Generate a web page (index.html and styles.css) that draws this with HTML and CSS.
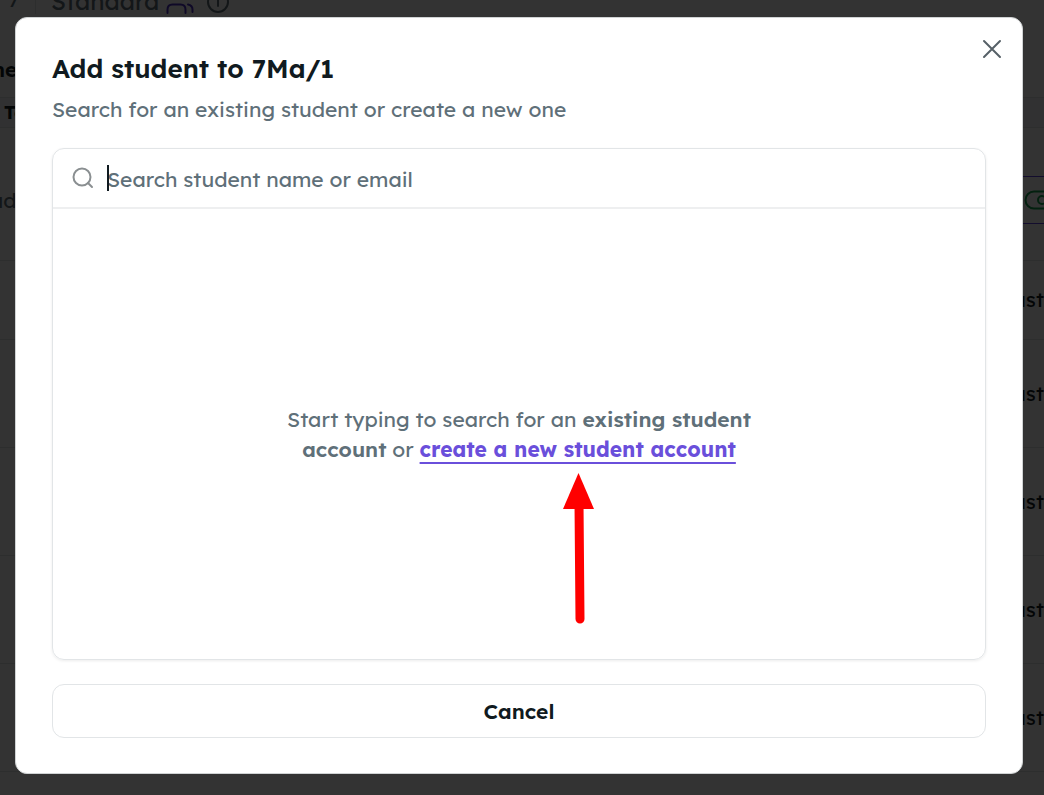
FILE: index.html
```html
<!DOCTYPE html>
<html lang="en">
<head>
<meta charset="utf-8">
<title>Add student to 7Ma/1</title>
<link rel="stylesheet" href="styles.css">
</head>
<body>
<div class="page" aria-hidden="true">
  <div class="page-top">
    <span class="grade">7</span>
    <span class="plan">Standard</span>
    <svg class="people" viewBox="0 0 28 14" width="28" height="14"><path d="M1.500 13V9.500q0-5 5-5h8q5 0 5 5V13M22 4.500q4.500 1 4.500 5V12"/></svg>
    <svg class="info" viewBox="0 0 24 24" width="24" height="24"><circle cx="12" cy="12" r="10"/><path d="M12 6v10"/></svg>
  </div>
  <div class="page-name">ne</div>
  <div class="page-tab">To</div>
  <div class="table-head">
    <span class="head-name">ad</span>
    <span class="toggle-cell"><svg viewBox="0 0 36 20" width="36" height="20"><rect x="1.500" y="1.500" width="33" height="17" rx="8.500"/><circle cx="18" cy="10" r="4"/></svg></span>
  </div>
  <div class="row row-space"></div>
  <div class="row row-short"><span>ast</span></div>
  <div class="row"><span>ast</span></div>
  <div class="row"><span>ast</span></div>
  <div class="row"><span>ast</span></div>
  <div class="row"><span>ast</span></div>
</div>
<div class="overlay">
  <section class="dialog" role="dialog" aria-modal="true" aria-labelledby="dialog-title">
    <button class="close" type="button" aria-label="Close">
      <svg viewBox="0 0 20 20" width="20" height="20"><path d="M2 2l16 16M18 2L2 18"/></svg>
    </button>
    <h1 class="title" id="dialog-title">Add student to 7Ma/1</h1>
    <p class="subtitle">Search for an existing student or create a new one</p>
    <div class="panel">
      <div class="search">
        <label class="search-label" for="student-search" aria-label="Search students"><svg viewBox="0 0 22 22" width="22" height="22"><circle cx="10" cy="10" r="8.500"/><path d="M16 16l4 4"/></svg></label>
        <div class="field">
          <input class="search-input" id="student-search" type="text" placeholder="Search student name or email">
          <span class="caret"></span>
        </div>
      </div>
      <div class="empty">
        <p class="hint">Start typing to search for an <strong>existing student account</strong> or <span class="create"><a class="create-link" href="#">create a new student account</a><svg class="arrow" viewBox="0 0 32 152" width="32" height="152"><path class="shaft" d="M16 30L17 146"/><path class="tip" d="M15.500 0L31 36H0z"/></svg></span></p>
      </div>
    </div>
    <button class="cancel" type="button">Cancel</button>
  </section>
</div>
</body>
</html>
```
FILE: styles.css
```css
* { box-sizing: border-box; }
body {
  margin: 0;
  height: 100vh;
  overflow: hidden;
  font-family: Lexend, Inter, "Open Sans", sans-serif;
  font-size: 21px;
  line-height: 30px;
  color: #101a20;
  background: #fff;
}
h1, p { margin: 0; }
svg { display: block; fill: none; stroke: currentColor; stroke-width: 2; stroke-linecap: round; }

.page { height: 100vh; overflow: hidden; }
.page-top {
  display: flex;
  align-items: flex-end;
  height: 14px;
  margin-bottom: 40px;
  color: #5f7079;
}
.grade { width: 36px; padding-left: 8px; border-right: 1px solid #dfe4e6; }
.plan { margin-left: 15px; font-size: 24px; line-height: 26px; }
.people { margin-left: 7px; stroke: #4b2fc0; }
.info { margin-left: 12px; }
.page-name { height: 43px; margin-left: -8px; font-weight: 600; }
.page-tab {
  height: 31px;
  padding-left: 4px;
  border: solid #dfe4e6;
  border-width: 1px 0;
  background: #f4f6f7;
  font-size: 18px;
  font-weight: 700;
}
.table-head {
  display: flex;
  justify-content: space-between;
  align-items: center;
  height: 48px;
  margin-top: 48px;
  color: #5f7079;
}
.head-name { margin-left: -10px; }
.toggle-cell {
  display: flex;
  align-items: center;
  width: 240px;
  height: 48px;
  border: solid #6044e0;
  border-width: 1px 0;
}
.toggle-cell svg { margin-left: auto; margin-right: -16px; stroke: #0fa04c; flex: none; }
.row {
  display: flex;
  align-items: center;
  justify-content: flex-end;
  height: 108px;
  padding-bottom: 2px;
  border-bottom: 1px solid #dfe4e6;
}
.row-space { height: 37px; }
.row-short { height: 79px; }

.overlay {
  position: fixed;
  inset: 0;
  display: flex;
  padding: 17px 21px 21px 15px;
  background: rgba(0, 0, 0, 0.8);
}
.dialog {
  position: relative;
  display: flex;
  flex: 1;
  flex-direction: column;
  padding: 36px 37px;
  border: 1px solid #d0d3d4;
  padding: 35px 36px;
  border-radius: 12px;
  background: #fff;
}
.close {
  position: absolute;
  top: 16px;
  right: 15px;
  display: grid;
  place-items: center;
  width: 30px;
  height: 30px;
  padding: 0;
  border: 0;
  background: none;
  color: #566067;
}
.title { margin-bottom: 9px; font-size: 26px; line-height: 32px; font-weight: 600; }
.subtitle { margin-bottom: 24px; color: #5f7079; }
.panel {
  display: flex;
  flex: 1;
  flex-direction: column;
  margin-bottom: 24px;
  border: 1px solid #e2e5e7;
  border-radius: 12px;
  box-shadow: 0 1px 3px rgba(0, 0, 0, 0.08);
}
.search {
  display: flex;
  align-items: center;
  height: 60px;
  padding: 0 19px;
  border-bottom: 2px solid #eeeff0;
}
.search-label { color: #8a8f91; }
.field { position: relative; flex: 1; margin-left: 13px; }
.search-input {
  width: 100%;
  height: 58px;
  padding: 2px 0 0;
  border: 0;
  outline: 0;
  background: none;
  font: inherit;
  color: inherit;
}
.search-input::placeholder { color: #5f7079; opacity: 1; }
.caret { position: absolute; left: 0; top: 16px; width: 2px; height: 26px; background: #101a20; }
.empty { display: flex; flex: 1; align-items: center; justify-content: center; }
.hint { max-width: 480px; text-align: center; color: #5f7079; }
.hint strong { font-weight: 600; }
.create { position: relative; display: inline-block; }
.create-link {
  color: #6a4fdb;
  font-weight: 700;
  text-decoration: underline;
  text-decoration-thickness: 2px;
  text-underline-offset: 5px;
  text-decoration-skip-ink: none;
}
.arrow { position: absolute; top: 39px; left: 50%; margin-left: -15px; color: #f00; }
.shaft { stroke-width: 9; }
.tip { fill: currentColor; stroke: none; }
.cancel {
  height: 54px;
  border: 1px solid #e2e5e7;
  border-radius: 12px;
  background: #fff;
  font: inherit;
  font-weight: 600;
  color: inherit;
}
```
